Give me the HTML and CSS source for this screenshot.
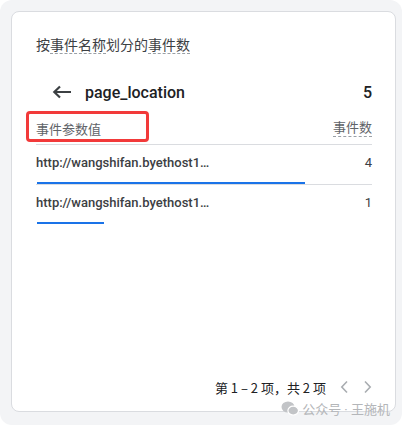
FILE: index.html
```html
<!doctype html>
<html lang="zh-CN">
<head>
  <meta charset="utf-8"/>
  <title>按事件名称划分的事件数</title>
  <link rel="stylesheet" href="styles.css">
</head>
<body>

  <div class="frame">
    <section class="card">
      <h2 class="card-title"><span>按</span><span class="dim">事件名称</span><span>划分的</span><span class="dim">事件数</span></h2>

      <header class="drill">
        <svg class="back" width="20" height="14" viewBox="0 0 20 14">
          <path d="M19 7H2.5 M8 1.5 L2.3 7 L8 12.5" />
        </svg>
        <span class="drill-name">page_location</span>
        <span class="drill-total">5</span>
      </header>

      <div class="table-head">
        <span class="col-name">事件参数值<i class="mark"></i></span>
        <span class="col-metric">事件数</span>
      </div>

      <div class="row">
        <div class="row-line">
          <span class="row-label">http://wangshifan.byethost1…</span>
          <span class="row-value">4</span>
        </div>
        <div class="bar"><div style="width: 80%"></div></div>
      </div>
      <div class="row last">
        <div class="row-line">
          <span class="row-label">http://wangshifan.byethost1…</span>
          <span class="row-value">1</span>
        </div>
        <div class="bar"><div style="width: 20%"></div></div>
      </div>

      <footer class="pager">
        <span class="pager-text">第 1 – 2 项，共 2 项</span>
        <svg class="chev" width="8" height="14" viewBox="0 0 8 14"><path d="M7 1.5 L1.8 7 L7 12.5" /></svg>
        <svg class="chev" width="8" height="14" viewBox="0 0 8 14"><path d="M1 1.5 L6.2 7 L1 12.5" /></svg>
      </footer>
    </section>

    <p class="watermark">
      <svg width="18" height="15" viewBox="0 0 18 15">
        <ellipse cx="7" cy="6" rx="6.5" ry="5.5" />
        <ellipse cx="12.2" cy="9.6" rx="5.3" ry="4.4" class="front" />
      </svg>
      <span>公众号 · 王施机</span>
    </p>
  </div>

</body>
</html>
```

FILE: styles.css
```css
:root {
  --text-dark: #202124;
  --text-main: #3c4043;
  --text-soft: #5f6368;
  --line: #dadce0;
  --blue: #1a73e8;
  --cjk: Roboto, "Noto Sans CJK SC", sans-serif;
}
* { margin: 0; padding: 0; box-sizing: border-box; }
html, body { background-color: white; font-family: var(--cjk); }

.frame {
  position: relative;
  width: 402px; height: 425px;
  background-color: #f3f4f6;
  border-radius: 12px;
  padding: 11px 6px 13px 11px;
  display: flex;
}
.card {
  flex: 1;
  display: flex; flex-direction: column;
  background-color: white;
  border: 1px solid var(--line);
  border-radius: 8px;
  padding: 23px 23px 12px 24px;
}

.card-title { font-size: 14px; font-weight: 400; line-height: 20px; color: var(--text-main); }
.card-title .dim { border-bottom: 1px dashed #9aa0a6; }

.drill { display: flex; align-items: center; height: 40px; margin-top: 17px; padding-left: 16px; }
.back { fill: none; stroke: var(--text-main); stroke-width: 2.2px; }
.drill-name { margin-left: 13px; font-size: 16px; font-weight: 500; color: var(--text-dark); flex: 1; }
.drill-total { font-size: 16px; font-weight: 500; color: var(--text-dark); }

.table-head {
  display: flex; justify-content: space-between; align-items: center;
  height: 33px; margin-top: 0;
  border-bottom: 1px solid var(--line);
  font-size: 13px; color: var(--text-soft);
}
.col-name { position: relative; }
.col-name .mark {
  position: absolute; left: -10px; top: -8px;
  width: 123px; height: 31px;
  border: 3px solid #f23a3a; border-radius: 4px;
}
.col-metric { border-bottom: 1px dashed #9aa0a6; line-height: 17px; }

.row { padding-top: 8px; border-bottom: 1px solid var(--line); }
.row.last { border-bottom: none; }
.row-line { display: flex; justify-content: space-between; line-height: 20px; font-size: 13px; color: var(--text-main); }
.row-label { font-weight: 500; }
.bar { margin-top: 9px; height: 2px; padding-left: 1px; }
.bar > div { height: 2px; background-color: var(--blue); }

.pager {
  margin-top: auto;
  display: flex; justify-content: flex-end; align-items: center;
  height: 24px;
  font-family: "Noto Sans CJK SC", sans-serif;
  font-size: 13px; color: var(--text-dark);
}
.pager-text { margin-right: 14px; }
.chev { fill: none; stroke: #a9adb1; stroke-width: 1.6px; }
.chev + .chev { margin-left: 16px; }

.watermark {
  position: absolute; right: 12px; bottom: 7px;
  display: flex; align-items: center; gap: 3px;
  font-size: 13px; color: #b4b6b9;
}
.watermark svg ellipse { fill: #c2c4c7; }
.watermark svg .front { stroke: white; stroke-width: 1.2px; }
```
